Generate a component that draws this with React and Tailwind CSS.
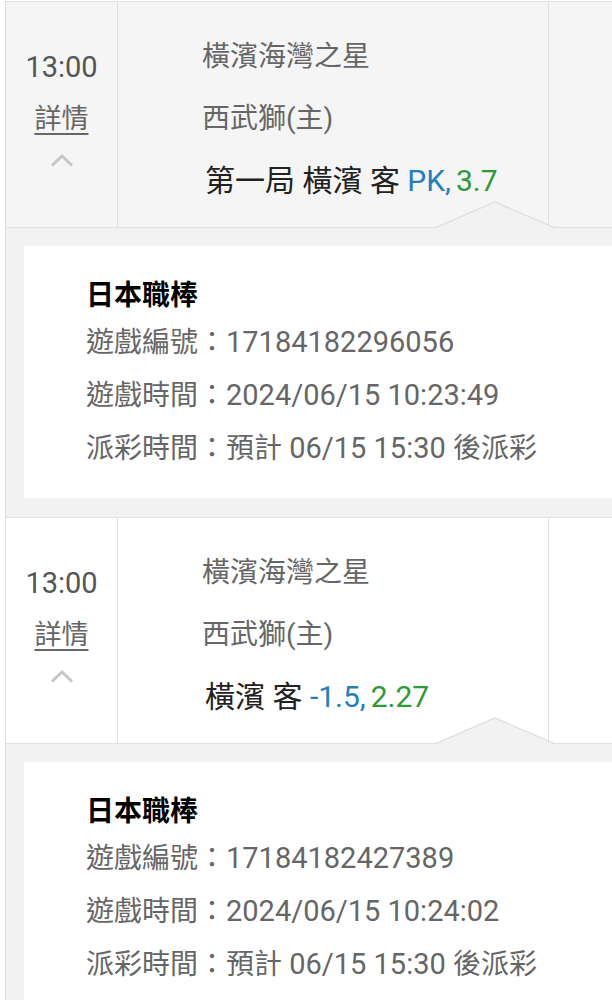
const bets = [
  {
    time: "13:00",
    home: "橫濱海灣之星",
    away: "西武獅(主)",
    pick: "第一局 橫濱 客",
    handicap: "PK,",
    odds: "3.7",
    rowBg: "bg-[#f5f5f5]",
    gameNo: "17184182296056",
    gameTime: "2024/06/15 10:23:49",
    payout: "預計 06/15 15:30 後派彩",
  },
  {
    time: "13:00",
    home: "橫濱海灣之星",
    away: "西武獅(主)",
    pick: "橫濱 客",
    handicap: "-1.5,",
    odds: "2.27",
    rowBg: "bg-white",
    gameNo: "17184182427389",
    gameTime: "2024/06/15 10:24:02",
    payout: "預計 06/15 15:30 後派彩",
  },
];

// latin digits render a touch wider than the CJK text around them
function Mixed({ text }) {
  const parts = text.split(/([\x20-\x7e]+)/).filter(Boolean);
  return parts.map((p, i) =>
    /^[\x20-\x7e]+$/.test(p) ? (
      <span key={i} className="text-[29px]">
        {p}
      </span>
    ) : (
      <span key={i}>{p}</span>
    )
  );
}

function ChevronUp() {
  return (
    <svg width="24" height="14" viewBox="0 0 24 14" className="mx-auto">
      <polyline points="2,12.5 12,3 22,12.5" fill="none" stroke="#c6c6c6" strokeWidth="3" />
    </svg>
  );
}

function Notch() {
  return (
    <svg
      width="118"
      height="27"
      viewBox="0 0 118 27"
      className="absolute left-[430px] bottom-[-1px]"
    >
      <polygon points="0,27 59,1 118,27" fill="#f2f2f2" />
      <polyline points="0,26.5 59,1 118,26.5" fill="none" stroke="#dedede" strokeWidth="1.2" />
    </svg>
  );
}

function BetRow({ bet }) {
  return (
    <div>
      <div className={`relative flex h-[226px] border-b border-[#e0e0e0] ${bet.rowBg}`}>
        <div className="w-[112px] shrink-0 border-r border-[#e0e0e0] pt-[39px] text-center">
          <div className="text-[29px] leading-[52px] text-[#555]">{bet.time}</div>
          <div className="text-[27px] leading-[52px] text-[#666] underline underline-offset-[5px] decoration-[1.5px]">
            詳情
          </div>
          <div className="mt-[8px]">
            <ChevronUp />
          </div>
        </div>
        <div className="w-[431px] shrink-0 border-r border-[#e0e0e0] pl-[84px] pt-[24px] text-[28px] leading-[62px]">
          <div className="text-[#666]">{bet.home}</div>
          <div className="text-[#666]">{bet.away}</div>
          <div className="pl-[3px] text-[30px] text-[#222]">
            {bet.pick} <span className="text-[#1f7fbf]">{bet.handicap}</span>
            <span className="ml-[5px] text-[#2f9a33]">{bet.odds}</span>
          </div>
        </div>
        <div className="flex-1" />
        <Notch />
      </div>
      <div className="flex border-b border-[#e0e0e0] bg-[#f2f2f2] pl-[18px] pt-[18px] pb-[19px]">
        <div className="flex-1 bg-white pl-[62px] pt-[30px] pb-[23px] text-[28px]">
          <div className="font-bold leading-[40px] text-black">日本職棒</div>
          <div className="leading-[53px] text-[#666]">
            <Mixed text={`遊戲編號：${bet.gameNo}`} />
          </div>
          <div className="leading-[53px] text-[#666]">
            <Mixed text={`遊戲時間：${bet.gameTime}`} />
          </div>
          <div className="leading-[53px] text-[#666]">
            <Mixed text={`派彩時間：${bet.payout}`} />
          </div>
        </div>
      </div>
    </div>
  );
}

export default function App() {
  return (
    <div
      className="w-[612px] h-[1000px] overflow-hidden bg-white pl-[5px] pt-px"
      style={{ fontFamily: 'Roboto, "Noto Sans CJK TC", sans-serif' }}
    >
      <div className="border-l border-t border-[#e0e0e0]">
        {bets.map((bet) => (
          <BetRow key={bet.gameNo} bet={bet} />
        ))}
      </div>
    </div>
  );
}
